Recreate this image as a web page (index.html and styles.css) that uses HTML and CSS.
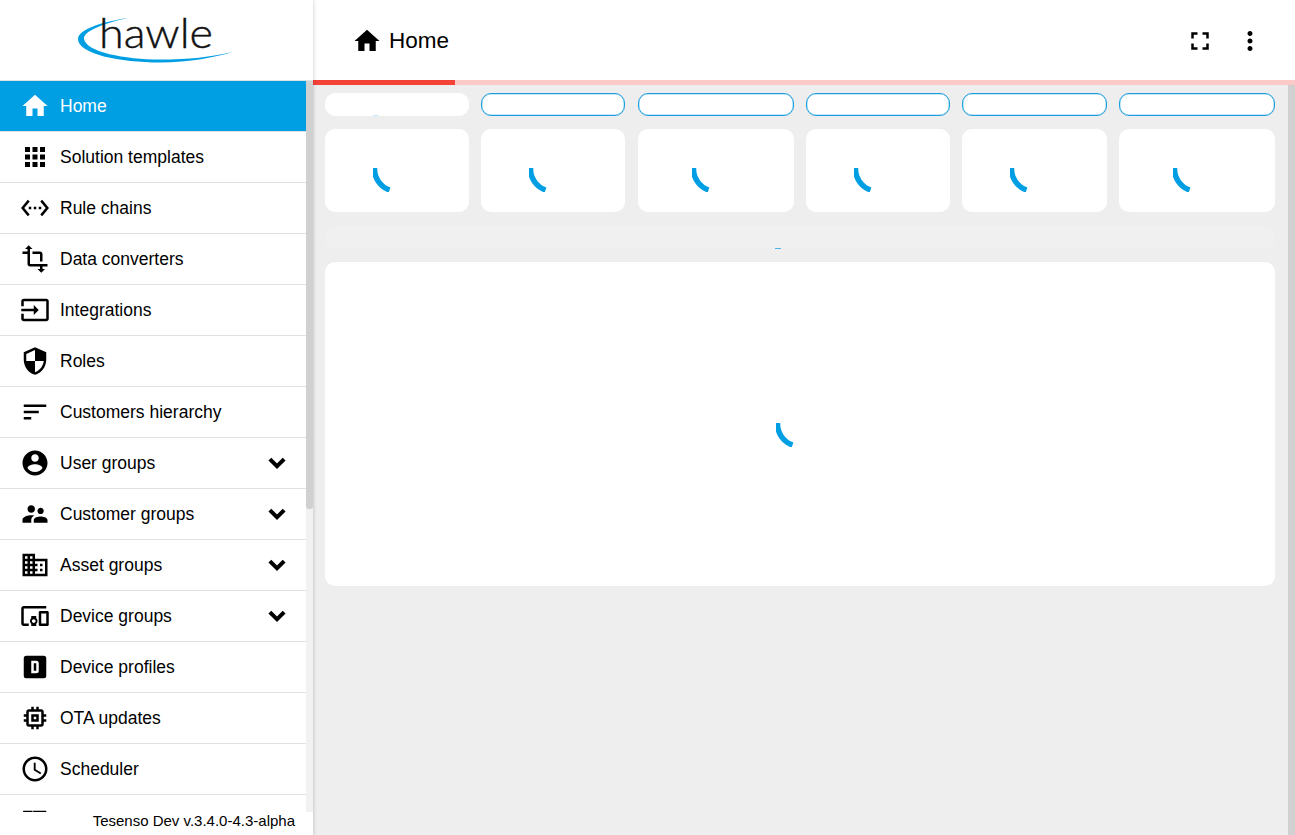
FILE: index.html
```html
<!DOCTYPE html>
<html lang="en">
<head>
    <meta charset="UTF-8">
    <meta name="viewport" content="width=device-width, initial-scale=1.0">
    <title>Home</title>
    <link rel="stylesheet" href="styles.css">
</head>
<body>
    <aside class="sidebar">
        <div class="logo">
            <svg width="313" height="80" viewBox="0 0 313 80">
                <path class="swoosh" d="M128 18C100 22 78 30 78 39C78 54 120 62.500 160 62.500C190 62.500 215 57 233 52C210 57 190 59.500 160 59.500C125 59.500 86 52 84 39C83 31 105 23 128 18Z"/>
                <text class="logo-text" x="99" y="48" textLength="114" lengthAdjust="spacingAndGlyphs">hawle</text>
            </svg>
        </div>
        <div class="nav-wrap">
            <nav class="nav">
                <a class="nav-item active"><svg class="icon" viewBox="0 0 24 24"><path d="M10 20v-6h4v6h5v-8h3L12 3 2 12h3v8z"/></svg><span>Home</span></a>
                <a class="nav-item"><svg class="icon" viewBox="0 0 24 24"><path d="M4 8h4V4H4v4zm6 12h4v-4h-4v4zm-6 0h4v-4H4v4zm0-6h4v-4H4v4zm6 0h4v-4h-4v4zm6-10v4h4V4h-4zm-6 4h4V4h-4v4zm6 6h4v-4h-4v4zm0 6h4v-4h-4v4z"/></svg><span>Solution templates</span></a>
                <a class="nav-item"><svg class="icon" viewBox="0 0 24 24"><path d="M7.770 6.760L6.230 5.480.82 12l5.410 6.520 1.540-1.280L3.420 12l4.350-5.240zM7 13h2v-2H7v2zm10-2h-2v2h2v-2zm-6 2h2v-2h-2v2zm6.770-7.520l-1.540 1.280L20.580 12l-4.350 5.240 1.540 1.280L23.180 12l-5.410-6.520z"/></svg><span>Rule chains</span></a>
                <a class="nav-item"><svg class="icon" viewBox="0 0 24 24"><path d="M22 18v-2H8V4h2L7 1 4 4h2v2H2v2h4v8c0 1.100.9 2 2 2h8v2h-2l3 3 3-3h-2v-2h4zM10 8h6v6h2V8c0-1.100-.9-2-2-2h-6v2z"/></svg><span>Data converters</span></a>
                <a class="nav-item"><svg class="icon" viewBox="0 0 24 24"><path d="M21 3.010H3c-1.100 0-2 .9-2 2V9h2V4.990h18v14.030H3V15H1v4.010c0 1.100.9 1.980 2 1.980h18c1.100 0 2-.88 2-1.980v-14c0-1.110-.9-2-2-2zM11 16l4-4-4-4v3H1v2h10v3z"/></svg><span>Integrations</span></a>
                <a class="nav-item"><svg class="icon" viewBox="0 0 24 24"><path d="M12 1L3 5v6c0 5.550 3.840 10.740 9 12 5.160-1.260 9-6.450 9-12V5l-9-4zm0 10.990h7c-.53 4.120-3.280 7.790-7 8.940V12H5V6.300l7-3.110v8.800z"/></svg><span>Roles</span></a>
                <a class="nav-item"><svg class="icon" viewBox="0 0 24 24"><path d="M3 18h6v-2H3v2zM3 6v2h18V6H3zm0 7h12v-2H3v2z"/></svg><span>Customers hierarchy</span></a>
                <a class="nav-item"><svg class="icon" viewBox="0 0 24 24"><path d="M12 2C6.480 2 2 6.480 2 12s4.480 10 10 10 10-4.480 10-10S17.520 2 12 2zm0 3c1.660 0 3 1.340 3 3s-1.340 3-3 3-3-1.340-3-3 1.340-3 3-3zm0 14.200c-2.500 0-4.710-1.280-6-3.220.03-1.990 4-3.080 6-3.080 1.990 0 5.970 1.090 6 3.080-1.290 1.940-3.500 3.220-6 3.220z"/></svg><span>User groups</span><svg class="chevron" viewBox="0 0 24 24"><path d="M16.590 8.590L12 13.170 7.410 8.590 6 10l6 6 6-6z"/></svg></a>
                <a class="nav-item"><svg class="icon" viewBox="0 0 24 24"><path d="M16.500 12c1.380 0 2.490-1.120 2.490-2.500S17.880 7 16.500 7C15.120 7 14 8.120 14 9.500s1.120 2.500 2.500 2.500zM9 11c1.660 0 2.990-1.340 2.990-3S10.660 5 9 5C7.340 5 6 6.340 6 8s1.340 3 3 3zm7.500 3c-1.830 0-5.500.92-5.500 2.750V19h11v-2.250c0-1.830-3.670-2.750-5.500-2.750zM9 13c-2.330 0-7 1.170-7 3.500V19h7v-2.250c0-.85.33-2.340 2.370-3.470C10.500 13.100 9.660 13 9 13z"/></svg><span>Customer groups</span><svg class="chevron" viewBox="0 0 24 24"><path d="M16.590 8.590L12 13.170 7.410 8.590 6 10l6 6 6-6z"/></svg></a>
                <a class="nav-item"><svg class="icon" viewBox="0 0 24 24"><path d="M12 7V3H2v18h20V7H12zM6 19H4v-2h2v2zm0-4H4v-2h2v2zm0-4H4V9h2v2zm0-4H4V5h2v2zm4 12H8v-2h2v2zm0-4H8v-2h2v2zm0-4H8V9h2v2zm0-4H8V5h2v2zm10 12h-8v-2h2v-2h-2v-2h2v-2h-2V9h8v10zm-2-8h-2v2h2v-2zm0 4h-2v2h2v-2z"/></svg><span>Asset groups</span><svg class="chevron" viewBox="0 0 24 24"><path d="M16.590 8.590L12 13.170 7.410 8.590 6 10l6 6 6-6z"/></svg></a>
                <a class="nav-item"><svg class="icon" viewBox="0 0 24 24"><path d="M3 6h18V4H3c-1.100 0-2 .9-2 2v12c0 1.100.9 2 2 2h4v-2H3V6zm10 6H9v1.780c-.61.55-1 1.330-1 2.220s.39 1.670 1 2.220V20h4v-1.780c.61-.55 1-1.340 1-2.220s-.39-1.670-1-2.220V12zm-2 5.500c-.83 0-1.500-.67-1.500-1.500s.67-1.500 1.500-1.500 1.500.67 1.500 1.500-.67 1.500-1.500 1.500zM22 8h-6c-.5 0-1 .5-1 1v10c0 .5.5 1 1 1h6c.5 0 1-.5 1-1V9c0-.5-.5-1-1-1zm-1 10h-4v-8h4v8z"/></svg><span>Device groups</span><svg class="chevron" viewBox="0 0 24 24"><path d="M16.590 8.590L12 13.170 7.410 8.590 6 10l6 6 6-6z"/></svg></a>
                <a class="nav-item"><svg class="icon" viewBox="0 0 24 24"><path fill-rule="evenodd" d="M5 3H19A2 2 0 0 1 21 5V19A2 2 0 0 1 19 21H5A2 2 0 0 1 3 19V5A2 2 0 0 1 5 3M9 7V17H13A2 2 0 0 0 15 15V9A2 2 0 0 0 13 7H9M11 9H13V15H11V9Z"/></svg><span>Device profiles</span></a>
                <a class="nav-item"><svg class="icon" viewBox="0 0 24 24"><path d="M15 9H9v6h6V9zm-2 4h-2v-2h2v2zm8-2V9h-2V7c0-1.100-.9-2-2-2h-2V3h-2v2h-2V3H9v2H7c-1.100 0-2 .9-2 2v2H3v2h2v2H3v2h2v2c0 1.100.9 2 2 2h2v2h2v-2h2v2h2v-2h2c1.100 0 2-.9 2-2v-2h2v-2h-2v-2h2zm-4 6H7V7h10v10z"/></svg><span>OTA updates</span></a>
                <a class="nav-item"><svg class="icon" viewBox="0 0 24 24"><path d="M11.990 2C6.470 2 2 6.480 2 12s4.470 10 9.990 10C17.520 22 22 17.520 22 12S17.520 2 11.990 2zM12 20c-4.420 0-8-3.580-8-8s3.580-8 8-8 8 3.580 8 8-3.580 8-8 8zm.5-13H11v6l5.250 3.150.75-1.230-4.500-2.670z"/></svg><span>Scheduler</span></a>
                <a class="nav-item"><svg class="icon" viewBox="0 0 24 24"><path d="M2.500 4.500h7.500v1H2.500zM10.500 4.500H21v1H10.500z"/></svg></a>
            </nav>
            <div class="scrollbar"><div class="thumb"></div></div>
        </div>
        <div class="version">Tesenso Dev v.3.4.0-4.3-alpha</div>
    </aside>

    <main class="main">
        <header class="topbar">
            <div class="title">
                <svg class="icon" viewBox="0 0 24 24"><path d="M10 20v-6h4v6h5v-8h3L12 3 2 12h3v8z"/></svg>
                <span>Home</span>
            </div>
            <div class="actions">
                <svg class="icon" viewBox="0 0 24 24"><path d="M7 14H5v5h5v-2H7v-3zm-2-4h2V7h3V5H5v5zm12 7h-3v2h5v-5h-2v3zM14 5v2h3v3h2V5h-5z"/></svg>
                <svg class="icon" viewBox="0 0 24 24"><path d="M12 8c1.100 0 2-.9 2-2s-.9-2-2-2-2 .9-2 2 .9 2 2 2zm0 2c-1.100 0-2 .9-2 2s.9 2 2 2 2-.9 2-2-.9-2-2-2zm0 6c-1.100 0-2 .9-2 2s.9 2 2 2 2-.9 2-2-.9-2-2-2z"/></svg>
            </div>
        </header>
        <div class="progress"><div class="progress-fill"></div></div>
        <div class="content-wrap">
            <div class="content">
                <div class="tile-grid">
                    <div class="pill plain"><i class="tick"></i></div>
                    <div class="pill"></div>
                    <div class="pill"></div>
                    <div class="pill"></div>
                    <div class="pill"></div>
                    <div class="pill"></div>
                    <div class="card"><svg class="spinner" viewBox="0 0 48 48"><path d="M1.500 24A22.500 22.500 0 0 0 16.500 46"/></svg></div>
                    <div class="card"><svg class="spinner" viewBox="0 0 48 48"><path d="M1.500 24A22.500 22.500 0 0 0 16.500 46"/></svg></div>
                    <div class="card"><svg class="spinner" viewBox="0 0 48 48"><path d="M1.500 24A22.500 22.500 0 0 0 16.500 46"/></svg></div>
                    <div class="card"><svg class="spinner" viewBox="0 0 48 48"><path d="M1.500 24A22.500 22.500 0 0 0 16.500 46"/></svg></div>
                    <div class="card"><svg class="spinner" viewBox="0 0 48 48"><path d="M1.500 24A22.500 22.500 0 0 0 16.500 46"/></svg></div>
                    <div class="card"><svg class="spinner" viewBox="0 0 48 48"><path d="M1.500 24A22.500 22.500 0 0 0 16.500 46"/></svg></div>
                </div>
                <div class="strip"><i class="dash"></i></div>
                <div class="card large"><svg class="spinner" viewBox="0 0 48 48"><path d="M1.500 24A22.500 22.500 0 0 0 16.500 46"/></svg></div>
            </div>
            <div class="page-scroll"></div>
        </div>
    </main>
</body>
</html>
```

FILE: styles.css
```css
html, body {
    height: 100%;
}
body {
    margin: 0;
    display: flex;
    height: 835px;
    overflow: hidden;
    font-family: "Liberation Sans", Arial, sans-serif;
    color: #000;
    background: #eee;
}
.icon {
    width: 30px;
    height: 30px;
    flex: none;
    fill: #000;
}

/* sidebar */
.sidebar {
    position: relative;
    z-index: 2;
    width: 313px;
    flex: none;
    display: flex;
    flex-direction: column;
    background: #fff;
    box-shadow: 1px 0 3px rgba(0, 0, 0, 0.15);
}
.logo {
    height: 80px;
    flex: none;
    border-bottom: 1px solid #e0e0e0;
}
.logo svg {
    display: block;
}
.swoosh {
    fill: #009fe3;
}
.logo-text {
    font-family: "Lato", "Liberation Sans", sans-serif;
    font-weight: 300;
    font-size: 42px;
    fill: #111;
    stroke: #111;
    stroke-width: 0.4px;
}
.nav-wrap {
    flex: 1;
    display: flex;
    min-height: 0;
}
.nav {
    flex: 1;
    min-width: 0;
    overflow: hidden;
}
.nav-item {
    display: flex;
    align-items: center;
    gap: 10px;
    height: 50px;
    padding: 0 20px;
    border-bottom: 1px solid #e0e0e0;
    font-size: 17.500px;
    color: #000;
}
.nav-item span {
    flex: 1;
}
.nav-item.active {
    background: #009fe3;
    color: #fff;
}
.nav-item.active .icon {
    fill: #fff;
}
.chevron {
    width: 30px;
    height: 30px;
    flex: none;
    margin-right: -6px;
    fill: #000;
    stroke: #000;
    stroke-width: 1.200px;
}
.scrollbar {
    width: 7px;
    flex: none;
    background: #f1f1f1;
}
.thumb {
    height: 428px;
    background: #d0d0d0;
    border-radius: 0 0 3px 3px;
}
.version {
    position: absolute;
    left: 0;
    right: 0;
    bottom: 0;
    height: 23px;
    padding-right: 18px;
    background: #fff;
    font-size: 15px;
    line-height: 18px;
    text-align: right;
}

/* main area */
.main {
    flex: 1;
    min-width: 0;
    display: flex;
    flex-direction: column;
}
.topbar {
    box-sizing: border-box;
    height: 80px;
    flex: none;
    display: flex;
    align-items: center;
    justify-content: space-between;
    padding: 2px 30px 0 39px;
    background: #fff;
}
.title {
    display: flex;
    align-items: center;
    gap: 7px;
    font-size: 22.500px;
}
.actions {
    display: flex;
    gap: 20px;
}
.progress {
    height: 5px;
    flex: none;
    background: #fccbc7;
}
.progress-fill {
    width: 142px;
    height: 100%;
    background: #f44336;
}
.content-wrap {
    flex: 1;
    display: flex;
    min-height: 0;
}
.content {
    flex: 1;
    min-width: 0;
    padding: 8px 13px 0 12px;
}
.page-scroll {
    width: 7px;
    flex: none;
    background: #d0d0d0;
}
.tile-grid {
    display: grid;
    grid-template-columns: 144.100fr 144.100fr 156.300fr 144.100fr 144.100fr 156.300fr;
    grid-template-rows: 23px 83px;
    gap: 13px 12.200px;
}
.pill {
    position: relative;
    box-sizing: border-box;
    background: #fff;
    border: 1px solid #1b9ee0;
    border-radius: 10px;
    box-shadow: inset 0 0 0 0.5px #8fd0f0;
}
.pill.plain {
    border-color: #fff;
    box-shadow: none;
}
.tick {
    position: absolute;
    left: 47px;
    bottom: -1px;
    width: 5px;
    height: 1px;
    background: #bfe6f7;
}
.card {
    display: flex;
    align-items: center;
    justify-content: center;
    padding-bottom: 5px;
    box-sizing: border-box;
    background: #fff;
    border-radius: 10px;
}
.spinner {
    width: 48px;
    height: 48px;
    fill: none;
    stroke: #009fe3;
    stroke-width: 5.500;
}
.strip {
    position: relative;
    height: 22px;
    margin-top: 14px;
    background: #f0f0f0;
    border-radius: 10px;
}
.dash {
    position: absolute;
    left: 450px;
    bottom: -1px;
    width: 6px;
    height: 1px;
    background: #4db5e6;
}
.card.large {
    height: 324px;
    margin-top: 14px;
    padding-bottom: 2px;
}
```
